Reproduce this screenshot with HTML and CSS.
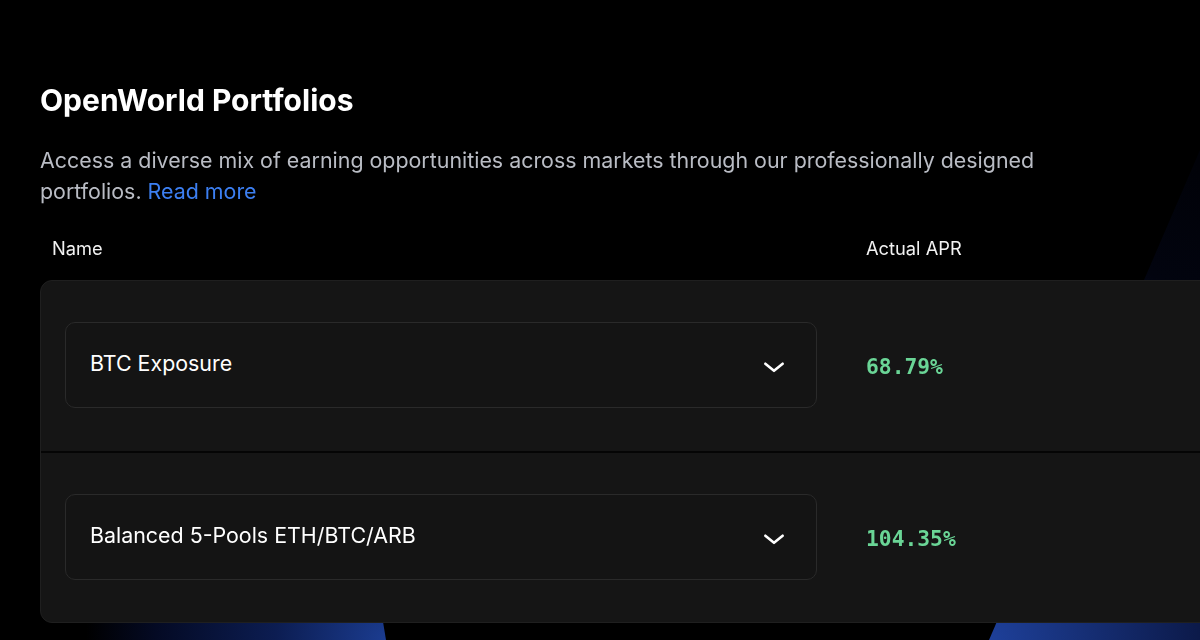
FILE: index.html
```html
<!DOCTYPE html>
<html lang="en">
<head>
<meta charset="utf-8">
<title>OpenWorld Portfolios</title>
<link rel="stylesheet" href="styles.css">
</head>
<body>
<main class="page">
  <h1 class="title">OpenWorld Portfolios</h1>
  <p class="desc">Access a diverse mix of earning opportunities across markets through our professionally designed portfolios. <a class="link" href="#">Read more</a></p>
  <div class="thead">
    <div class="th th-name">Name</div>
    <div class="th th-apr">Actual APR</div>
  </div>
  <div class="card">
    <div class="row">
      <div class="select">
        <span class="select-label">BTC Exposure</span>
        <svg class="chev" width="26" height="26" viewBox="0 0 24 24" fill="none" stroke="#fff" stroke-width="2.4" stroke-linecap="round" stroke-linejoin="round"><path d="M4 9l8 6.5 8-6.5"/></svg>
      </div>
      <div class="apr">68.79%</div>
    </div>
    <div class="row">
      <div class="select">
        <span class="select-label">Balanced 5-Pools ETH/BTC/ARB</span>
        <svg class="chev" width="26" height="26" viewBox="0 0 24 24" fill="none" stroke="#fff" stroke-width="2.4" stroke-linecap="round" stroke-linejoin="round"><path d="M4 9l8 6.5 8-6.5"/></svg>
      </div>
      <div class="apr">104.35%</div>
    </div>
  </div>
</main>
</body>
</html>
```
FILE: styles.css
```css
* { box-sizing: border-box; }
html, body { height: 100%; }
body {
  margin: 0;
  overflow: hidden;
  background: #000;
  font-family: Inter, "Noto Sans", sans-serif;
  color: #fff;
  position: relative;
}
/* decorative background glows */
body::before,
body::after {
  content: "";
  position: fixed;
  inset: 0;
  z-index: 0;
  pointer-events: none;
}
body::before {
  clip-path: polygon(0 300px, 330px 300px, 386px 640px, 0 640px);
  background: radial-gradient(circle at 386px 640px, #1b3c90 0, #0c1d52 110px, #040a24 230px, #000 300px);
}
body::after {
  clip-path: polygon(1200px 150px, 1200px 640px, 989px 640px);
  background: radial-gradient(circle at 989px 640px, #1e409a 0, #0b1846 220px, #060b2a 310px, #02040f 400px, #010208 520px);
}
.page {
  position: relative;
  z-index: 1;
  padding: 82px 0 0 40px;
  width: 1300px;
}
.title {
  margin: 0;
  font-size: 30px;
  line-height: 36px;
  font-weight: 700;
}
.desc {
  margin: 27px 0 0;
  max-width: 1060px;
  font-size: 21.4px;
  line-height: 31px;
  color: #b9bcc4;
}
.link { color: #3c7ff2; text-decoration: none; }
.thead {
  display: flex;
  margin-top: 21px;
  height: 40px;
  align-items: center;
  font-size: 18.3px;
}
.th { color: #f2f2f2; }
.th-name { padding-left: 12px; width: 826px; }
.card {
  width: 1260px;
  margin-top: 12px;
  background: #151515;
  border: 1px solid #1f1f1f;
  border-radius: 12px;
  overflow: hidden;
}
.row {
  display: flex;
  align-items: center;
  padding: 41px 0 43px 24px;
}
.row + .row { border-top: 2px solid #050505; padding-bottom: 42px; }
.select {
  width: 752px;
  height: 86px;
  border: 1px solid #2a2a2a;
  border-radius: 10px;
  background: #141414;
  display: flex;
  align-items: center;
  justify-content: space-between;
  padding: 0 29px 0 24px;
}
.select-label {
  font-size: 21.4px;
  color: #fff;
  margin-top: -4px;
}
.chev { margin-top: 3px; }
.apr {
  margin-left: 49px;
  font-family: "DejaVu Sans Mono", "Liberation Mono", monospace;
  font-weight: 700;
  font-size: 21.3px;
  color: #6ad596;
  margin-top: 2px;
}
```
